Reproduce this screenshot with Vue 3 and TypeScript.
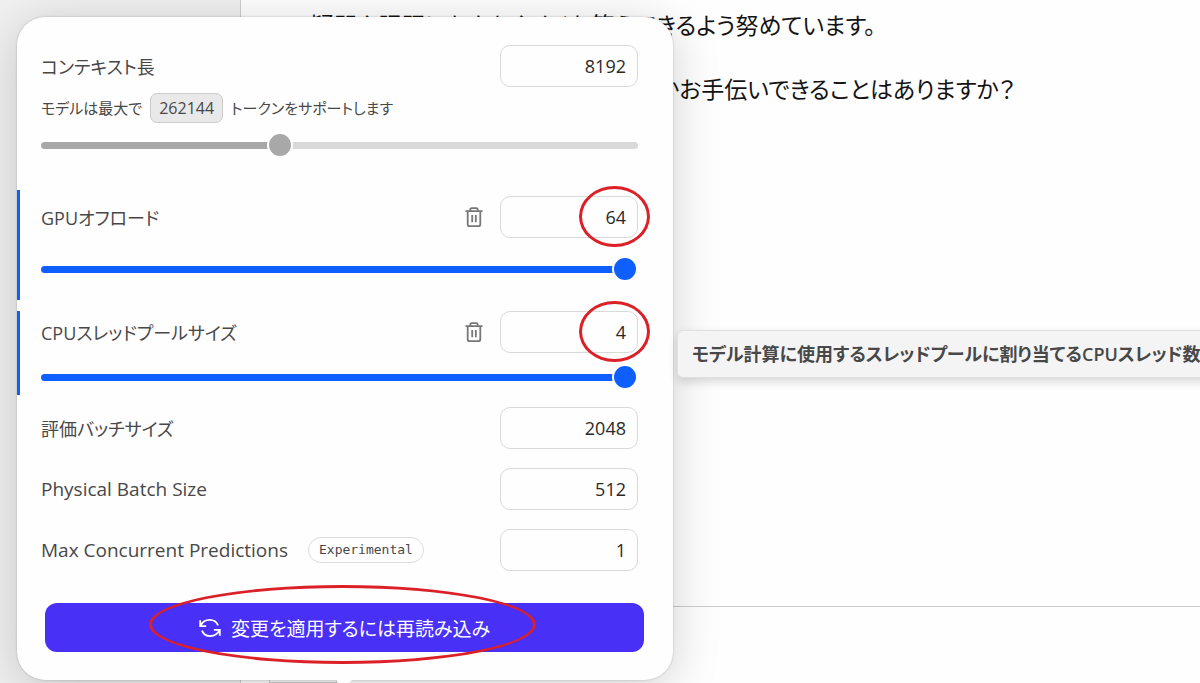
<script setup lang="ts">
import { ref } from 'vue'

const contextLength = ref('8192')
const contextPosition = ref(395)
const gpuOffload = ref('64')
const cpuThreads = ref('4')
const gpuPosition = ref(64)
const cpuPosition = ref(4)

interface NumberField {
  id: string
  label: string
  value: string
  badge?: string
}

const fields = ref<NumberField[]>([
  { id: 'eval-batch', label: '評価バッチサイズ', value: '2048' },
  { id: 'physical-batch', label: 'Physical Batch Size', value: '512' },
  { id: 'max-predictions', label: 'Max Concurrent Predictions', value: '1', badge: 'Experimental' },
])

const fill = (value: number, max: number) => ({ '--fill': String(value / max) })
</script>

<template>
  <div class="app">
    <aside class="sidebar"></aside>
    <main class="chat">
      <div class="messages">
        <p>疑問や課題にわかりやすくお答えできるよう努めています。</p>
        <p class="second">本日はどのようなことでしょうか。何かお手伝いできることはありますか？</p>
      </div>
      <footer class="composer"><div class="composer-box"></div></footer>
    </main>

    <section class="popover" aria-label="モデル設定">
      <div class="item context">
        <div class="row">
          <label for="context">コンテキスト長</label>
          <span class="number"><input id="context" v-model="contextLength" type="text" inputmode="numeric" /></span>
        </div>
        <p class="hint">モデルは最大で <code>262144</code> トークンをサポートします</p>
        <input v-model.number="contextPosition" class="slider gray" type="range" min="0" max="1000"
          aria-label="コンテキスト長" :style="fill(contextPosition, 1000)" />
      </div>

      <div class="item changed gpu">
        <div class="row">
          <label for="gpu">GPUオフロード</label>
          <button class="reset" type="button" aria-label="リセット">
            <svg viewBox="0 0 20 22" width="20" height="22">
              <path d="M1.500 5.200h17M6.300 5V3.600c0-.9.7-1.500 1.500-1.500h4.400c.8 0 1.500.6 1.500 1.500V5M3.700 5.200v13c0 1.200.8 2 2 2h8.600c1.200 0 2-.8 2-2v-13M8.200 9v7.200M11.800 9v7.200" />
            </svg>
          </button>
          <span class="number"><input id="gpu" v-model="gpuOffload" type="text" inputmode="numeric" /><i class="mark"></i></span>
        </div>
        <input v-model.number="gpuPosition" class="slider" type="range" min="0" max="64"
          aria-label="GPUオフロード" :style="fill(gpuPosition, 64)" />
      </div>

      <div class="item changed cpu">
        <div class="row">
          <label for="cpu">CPUスレッドプールサイズ</label>
          <button class="reset" type="button" aria-label="リセット">
            <svg viewBox="0 0 20 22" width="20" height="22">
              <path d="M1.500 5.200h17M6.300 5V3.600c0-.9.7-1.500 1.500-1.500h4.400c.8 0 1.500.6 1.500 1.500V5M3.700 5.200v13c0 1.200.8 2 2 2h8.600c1.200 0 2-.8 2-2v-13M8.200 9v7.200M11.800 9v7.200" />
            </svg>
          </button>
          <span class="number"><input id="cpu" v-model="cpuThreads" type="text" inputmode="numeric" /><i class="mark"></i></span>
        </div>
        <input v-model.number="cpuPosition" class="slider" type="range" min="0" max="4"
          aria-label="CPUスレッドプールサイズ" :style="fill(cpuPosition, 4)" />
      </div>

      <div class="fields">
        <div v-for="field in fields" :key="field.id" class="row">
          <label :for="field.id" :lang="field.id === 'eval-batch' ? 'ja' : 'en'">{{ field.label }}</label>
          <span v-if="field.badge" class="badge">{{ field.badge }}</span>
          <span class="number"><input :id="field.id" v-model="field.value" type="text" inputmode="numeric" /></span>
        </div>
      </div>

      <div class="action">
        <button class="apply" type="button">
          <svg viewBox="0 0 22 20" width="22" height="20">
            <path d="M1.200 2.200v6h6M1.600 7.800C3.200 4.200 6.700 1.900 10.700 1.900c3.900 0 7.100 2.200 8.300 5.500M20.800 17.800v-6h-6M20.400 12.200c-1.600 3.600-5.100 5.900-9.100 5.900-3.900 0-7.100-2.200-8.300-5.500" />
          </svg>
          変更を適用するには再読み込み
        </button>
        <i class="mark wide"></i>
      </div>
      <i class="arrow"></i>
    </section>

    <div class="tooltip" role="tooltip">モデル計算に使用するスレッドプールに割り当てるCPUスレッド数</div>
  </div>
</template>

<style>
body {
  margin: 0;
}
</style>

<style scoped>
.app {
  position: relative;
  display: flex;
  height: 100vh;
  overflow: hidden;
  background: #fefefe;
  color: #484848;
  font-family: 'Open Sans', 'Noto Sans CJK JP', sans-serif;
  font-size: 18px;
  font-feature-settings: 'palt';
}
.app * {
  box-sizing: border-box;
}
.sidebar {
  flex: none;
  width: 240px;
  background: #f0f0f0;
}
.chat {
  flex: 1;
  display: flex;
  flex-direction: column;
  min-width: 0;
  border-left: 1px solid #cfcfcf;
}
.messages {
  flex: 1;
  padding-left: 70px;
  color: #141414;
  font-size: 23px;
  line-height: 32px;
}
.messages p {
  width: max-content;
  margin: 9px 0 32px;
}
.composer {
  height: 77px;
  padding: 16px 28px 0;
  border-top: 1px solid #cccccc;
}
.composer-box {
  width: 68px;
  height: 100%;
  border: 1px solid #cccccc;
}
.popover {
  position: absolute;
  top: 17px;
  left: 17px;
  width: 656px;
  padding: 28px 0;
  border-radius: 28px;
  background: #fefefe;
  box-shadow: 0 0 2px rgba(0, 0, 0, 0.25), 0 8px 48px rgba(0, 0, 0, 0.18);
}
.item {
  padding: 0 35px 0 24px;
}
.row {
  display: flex;
  align-items: center;
}
.row label:lang(en) {
  font-size: 19px;
}
.number {
  position: relative;
  flex: none;
  width: 138px;
  height: 42px;
  margin-left: auto;
}
.number input {
  width: 100%;
  height: 100%;
  padding: 0 11px;
  border: 1px solid #d9d9d9;
  border-radius: 10px;
  background: transparent;
  color: #2a2a2a;
  font: inherit;
  text-align: right;
}
.hint {
  display: flex;
  align-items: center;
  gap: 8px;
  margin: 6px 0 9px;
  font-size: 15px;
  line-height: 30px;
}
.hint code {
  padding: 0 8px;
  border: 1px solid #cccccc;
  border-radius: 7px;
  background: #e9e9e9;
  font-family: 'Open Sans', sans-serif;
  font-size: 16px;
  line-height: 28px;
}
.slider {
  --color: #0f5fff;
  --stop: calc(13px + (100% - 26px) * var(--fill));
  display: block;
  width: 100%;
  height: 26px;
  margin: 0;
  appearance: none;
  background: none;
}
.slider.gray {
  --color: #a8a8a8;
}
.slider::-webkit-slider-runnable-track {
  height: 7px;
  border-radius: 4px;
  background: linear-gradient(to right, var(--color) var(--stop), #d9d9d9 var(--stop));
}
.slider::-webkit-slider-thumb {
  width: 26px;
  height: 26px;
  margin-top: -10px;
  appearance: none;
  border: 2px solid #fefefe;
  border-radius: 50%;
  background: var(--color);
}
.changed {
  padding-left: 21px;
  border-left: 3px solid #0f5fff;
}
.gpu {
  margin-top: 32px;
  padding-top: 6px;
  padding-bottom: 18px;
}
.gpu .slider {
  margin-top: 18px;
}
.cpu {
  margin-top: 11px;
  padding-bottom: 5px;
}
.cpu .slider {
  margin-top: 11px;
}
.reset {
  display: flex;
  margin-left: auto;
  padding: 0;
  border: 0;
  background: none;
}
.reset + .number {
  margin-left: 16px;
}
.reset svg {
  fill: none;
  stroke: #777777;
  stroke-width: 1.8;
}
.fields {
  display: flex;
  flex-direction: column;
  gap: 19px;
  padding: 12px 35px 0 24px;
}
.badge {
  margin-left: 20px;
  padding: 0 10px;
  border: 1px solid #dddddd;
  border-radius: 14px;
  font-family: 'DejaVu Sans Mono', monospace;
  font-size: 13px;
  line-height: 24px;
}
.action {
  position: relative;
  margin: 32px 29px 0 28px;
}
.apply {
  display: flex;
  align-items: center;
  justify-content: center;
  gap: 10px;
  width: 100%;
  height: 49px;
  border: 0;
  border-radius: 12px;
  background: #4930f7;
  color: #ffffff;
  font: inherit;
  font-size: 19px;
  font-feature-settings: inherit;
}
.apply svg {
  fill: none;
  stroke: #ffffff;
  stroke-width: 1.8;
}
.mark {
  position: absolute;
  top: -10px;
  right: -12px;
  width: 71px;
  height: 61px;
  border: 3px solid #dc2028;
  border-radius: 50%;
  pointer-events: none;
}
.mark.wide {
  top: -18px;
  right: auto;
  left: 104px;
  width: 387px;
  height: 79px;
}
.arrow {
  position: absolute;
  top: 100%;
  left: 319px;
  border: 8px solid transparent;
  border-top-color: #fefefe;
}
.tooltip {
  position: absolute;
  top: 330px;
  left: 677px;
  padding: 0 14px;
  border: 1px solid #e0e0e0;
  border-radius: 6px;
  background: #f4f4f4;
  box-shadow: 0 4px 10px rgba(0, 0, 0, 0.15);
  font-size: 18px;
  font-weight: 600;
  line-height: 46px;
  white-space: nowrap;
}
</style>
